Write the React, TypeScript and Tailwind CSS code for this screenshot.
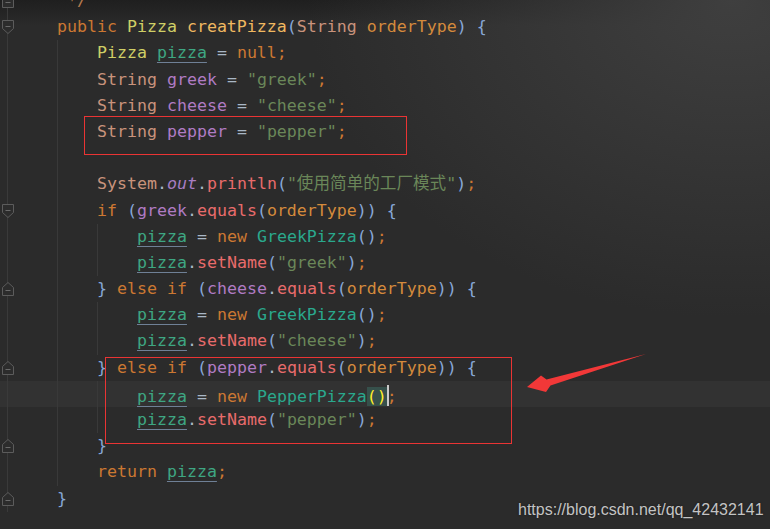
type Tok = [string, string];
type Line = { indent: number; marker?: "start" | "end"; toks: Tok[]; current?: boolean };

const K = "text-[#cc7832]";
const CL = "text-[#cfcf66]";
const FN = "text-[#f0b860]";
const TY = "text-[#c9937c]";
const LV = "text-[#b07bc4]";
const ST = "text-[#6a8759]";
const FD = "text-[#3ea682] underline decoration-[#6f8096] underline-offset-[4px]";
const NC = "text-[#2aa88d]";
const MT = "text-[#e86b6b]";
const PR = "text-[#88a8d8]";
const PA = "text-[#d48a3c]";
const OP = "text-[#a9b7c6]";
const OUT = "text-[#a77dc2] italic";
const CM = "text-[#b47a4e]";
const SP = "";

const lines: Line[] = [
  { indent: 4, marker: "end", toks: [[" */", CM]] },
  {
    indent: 4,
    marker: "start",
    toks: [
      ["public", K], [" ", SP], ["Pizza", CL], [" ", SP], ["creatPizza", FN], ["(", PR],
      ["String", TY], [" ", SP], ["orderType", PA], [")", PR], [" ", SP], ["{", PR],
    ],
  },
  { indent: 8, toks: [["Pizza", CL], [" ", SP], ["pizza", FD], [" = ", OP], ["null", K], [";", K]] },
  { indent: 8, toks: [["String", TY], [" ", SP], ["greek", LV], [" = ", OP], ['"greek"', ST], [";", K]] },
  { indent: 8, toks: [["String", TY], [" ", SP], ["cheese", LV], [" = ", OP], ['"cheese"', ST], [";", K]] },
  { indent: 8, toks: [["String", TY], [" ", SP], ["pepper", LV], [" = ", OP], ['"pepper"', ST], [";", K]] },
  { indent: 8, toks: [] },
  {
    indent: 8,
    toks: [
      ["System", TY], [".", OP], ["out", OUT], [".", OP], ["println", MT], ["(", PR],
      ['"使用简单的工厂模式"', ST], [")", PR], [";", K],
    ],
  },
  {
    indent: 8,
    marker: "start",
    toks: [
      ["if", K], [" ", SP], ["(", PR], ["greek", LV], [".", OP], ["equals", MT], ["(", PR],
      ["orderType", PA], ["))", PR], [" ", SP], ["{", PR],
    ],
  },
  { indent: 12, toks: [["pizza", FD], [" = ", OP], ["new", K], [" ", SP], ["GreekPizza", NC], ["()", PR], [";", K]] },
  { indent: 12, toks: [["pizza", FD], [".", OP], ["setName", MT], ["(", PR], ['"greek"', ST], [")", PR], [";", K]] },
  {
    indent: 8,
    marker: "end",
    toks: [
      ["}", PR], [" ", SP], ["else", K], [" ", SP], ["if", K], [" ", SP], ["(", PR], ["cheese", LV],
      [".", OP], ["equals", MT], ["(", PR], ["orderType", PA], ["))", PR], [" ", SP], ["{", PR],
    ],
  },
  { indent: 12, toks: [["pizza", FD], [" = ", OP], ["new", K], [" ", SP], ["GreekPizza", NC], ["()", PR], [";", K]] },
  { indent: 12, toks: [["pizza", FD], [".", OP], ["setName", MT], ["(", PR], ['"cheese"', ST], [")", PR], [";", K]] },
  {
    indent: 8,
    marker: "end",
    toks: [
      ["}", PR], [" ", SP], ["else", K], [" ", SP], ["if", K], [" ", SP], ["(", PR], ["pepper", LV],
      [".", OP], ["equals", MT], ["(", PR], ["orderType", PA], ["))", PR], [" ", SP], ["{", PR],
    ],
  },
  { indent: 12, current: true, toks: [["pizza", FD], [" = ", OP], ["new", K], [" ", SP], ["PepperPizza", NC]] },
  { indent: 12, toks: [["pizza", FD], [".", OP], ["setName", MT], ["(", PR], ['"pepper"', ST], [")", PR], [";", K]] },
  { indent: 8, marker: "end", toks: [["}", PR]] },
  { indent: 8, toks: [["return", K], [" ", SP], ["pizza", FD], [";", K]] },
  { indent: 4, marker: "end", toks: [["}", PR]] },
];

function FoldMarker({ kind }: { kind: "start" | "end" }) {
  return (
    <svg width="12" height="14" viewBox="0 0 12 14" className="block">
      {kind === "start" ? (
        <path d="M0.5 0.5H11.5V8.5L6 13.5L0.5 8.5Z" fill="#2c2c2c" stroke="#5c5c5c" />
      ) : (
        <path d="M0.5 13.5H11.5V5.5L6 0.5L0.5 5.5Z" fill="#2c2c2c" stroke="#5c5c5c" />
      )}
      <path d={kind === "start" ? "M3.5 6.5H8.5" : "M3.5 8.5H8.5"} stroke="#6a6a6a" />
    </svg>
  );
}

function CodeLine({ line }: { line: Line }) {
  const groups = Math.floor(line.indent / 4);
  return (
    <div className={`flex h-[26.2px] ${line.current ? "bg-[#323232]" : ""}`}>
      <div className="flex w-[15px] shrink-0 items-center justify-center bg-[linear-gradient(to_right,transparent_7px,#3a3a3a_7px,#3a3a3a_8px,transparent_8px)]">
        {line.marker && <FoldMarker kind={line.marker} />}
      </div>
      <div className="flex pl-[2px]">
        {Array.from({ length: groups }).map((_, i) => (
          <span
            key={i}
            className={`block w-[40px] shrink-0 ${i > 0 ? "border-l border-[#393939]" : ""}`}
          />
        ))}
        <span className="whitespace-pre leading-[26.2px]">
          {line.toks.map(([t, c], i) => (
            <span key={i} className={c}>
              {t}
            </span>
          ))}
          {line.current && (
            <>
              <span className="bg-[#36504b] text-[#ffef28]">()</span>
              <span className="-mr-[2px] inline-block h-[21px] w-[2px] translate-y-[4px] bg-[#c9c9c9]" />
              <span className={K}>;</span>
            </>
          )}
        </span>
      </div>
    </div>
  );
}

export default function App() {
  return (
    <div className="relative h-[529px] w-[770px] overflow-hidden bg-[#2b2b2b] bg-[radial-gradient(ellipse_55%_60%_at_95%_0%,#3f3f3f,transparent),linear-gradient(to_bottom,#1f1f1f,transparent_26px)] font-['DejaVu_Sans_Mono','Noto_Sans_CJK_SC',monospace] text-[16.6px]">
      <div className="-mt-[12px] flex flex-col">
        {lines.map((l, i) => (
          <CodeLine key={i} line={l} />
        ))}
      </div>

      {/* annotations */}
      <div className="absolute left-[84px] top-[116px] h-[39px] w-[323px] border border-[#ea3434]" />
      <div className="absolute left-[105px] top-[357px] h-[87px] w-[407px] border border-[#ea3434]" />
      <svg className="absolute left-0 top-0" width="770" height="529" viewBox="0 0 770 529">
        <path
          d="M527 387L541 375.5L546.5 379.5L646 354L550.5 385.5L546 392Z"
          fill="#f23838"
        />
      </svg>

      <div className="absolute left-[518px] top-[502px] font-['Liberation_Sans',Arial,sans-serif] text-[16px] leading-none text-[#c4c4c4] [text-shadow:0_0_2px_#1a1a1a]">
        https://blog.csdn.net/qq_42432141
      </div>
    </div>
  );
}
